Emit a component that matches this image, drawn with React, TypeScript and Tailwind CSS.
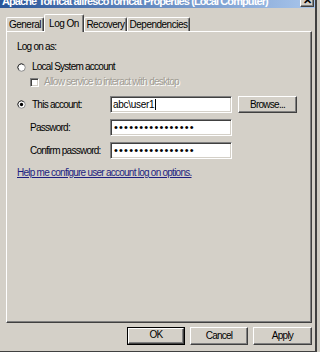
import React from "react";

const TABS = ["General", "Log On", "Recovery", "Dependencies"];
const TAB_W: Record<string, string> = {
  General: "w-[38px]",
  "Log On": "w-[40px]",
  Recovery: "w-[43px]",
  Dependencies: "w-[63px]",
};

const raised =
  "border border-t-white border-l-white border-r-[#404040] border-b-[#404040] shadow-[inset_-1px_-1px_0_#808080] bg-[#d4d0c8]";
const sunken =
  "border border-t-[#808080] border-l-[#808080] border-r-white border-b-white shadow-[inset_1px_1px_0_#404040,inset_-1px_-1px_0_#d4d0c8] bg-white";

function Radio({ checked }: { checked?: boolean }) {
  return (
    <svg width="9" height="9" viewBox="0 0 12 12" className="shrink-0">
      <circle cx="6" cy="6" r="5" fill="#fff" stroke="#8a8a8a" strokeWidth="1.3" />
      <path d="M2.5 9 A4.4 4.4 0 0 1 9 2.5" fill="none" stroke="#303030" strokeWidth="1.3" />
      {checked && <circle cx="6" cy="6" r="2.2" fill="#000" />}
    </svg>
  );
}

function Dots() {
  return (
    <span className="text-[11px] leading-none tracking-[1.2px] text-black">
      {"••••••••••••••••"}
    </span>
  );
}

/** Service properties dialog, Log On page, Windows Classic look. */
export default function App() {
  return (
    <div className="flex h-[352px] w-[320px] overflow-hidden bg-[#cfccc4] font-['Liberation_Sans',Arial,sans-serif] text-[10px] leading-[12px] tracking-[-0.75px] text-black">
      <div className="flex w-[317px] flex-col border-r-2 border-b border-r-[#404040] border-b-[#404040] bg-[#d4d0c8]">
        {/* title bar, top cut off */}
        <div className="flex h-[8px] shrink-0 items-start overflow-hidden bg-gradient-to-r from-[#2a5699] to-[#a9c6ec]">
          <div className="-mt-[5px] flex-1 pl-[2px] text-[11px] font-bold leading-[13px] tracking-[-0.9px] text-white">
            Apache Tomcat alfrescoTomcat Properties (Local Computer)
          </div>
          <div className={`-mt-[7px] mr-[1px] flex h-[14px] w-[14px] items-end justify-center ${raised}`}>
            <span className="text-[11px] font-bold leading-[12px]">✕</span>
          </div>
        </div>

        {/* tabs */}
        <div className="mt-[6px] flex h-[17px] items-end pl-[6px]">
          {TABS.map((t) => {
            const on = t === "Log On";
            return (
              <div
                key={t}
                className={`${TAB_W[t]} flex items-center justify-center rounded-t-[2px] border border-b-0 border-t-white border-l-white border-r-[#404040] bg-[#d4d0c8] tracking-[-0.5px] shadow-[inset_-1px_0_0_#808080] ${
                  on ? "relative z-10 -mb-[1px] h-[18px]" : "h-[14px]"
                }`}
              >
                {t}
              </div>
            );
          })}
        </div>

        {/* page */}
        <div className="ml-[6px] flex h-[292px] w-[306px] flex-col border border-t-white border-l-white border-r-[#404040] border-b-[#404040] pl-[10px] pt-[9px] shadow-[inset_-1px_-1px_0_#808080]">
          <div>Log on as:</div>

          <div className="mt-[8px] flex items-center gap-[6px]">
            <Radio />
            <span>Local System account</span>
          </div>

          <div className="mt-[3px] flex items-center gap-[5px] pl-[13px]">
            <span className={`h-[9px] w-[9px] shrink-0 ${sunken} bg-[#d4d0c8]`} />
            <span className="text-[#a09c94] [text-shadow:1px_1px_0_#fff]">
              Allow service to interact with desktop
            </span>
          </div>

          <div className="mt-[8px] flex h-[17px] items-center">
            <div className="flex w-[93px] items-center gap-[6px]">
              <Radio checked />
              <span>This account:</span>
            </div>
            <div className={`flex h-[17px] w-[122px] items-center pl-[2px] tracking-[-0.3px] ${sunken}`}>
              abc\user1<span className="ml-[1px] inline-block h-[11px] w-px bg-black" />
            </div>
            <button className={`ml-[6px] h-[17px] w-[59px] ${raised}`}>Browse...</button>
          </div>

          <div className="mt-[6px] flex h-[17px] items-center">
            <span className="w-[93px] pl-[13px]">Password:</span>
            <div className={`flex h-[17px] w-[122px] items-center pl-[3px] ${sunken}`}>
              <Dots />
            </div>
          </div>

          <div className="mt-[6px] flex h-[17px] items-center">
            <span className="w-[93px] pl-[13px]">Confirm password:</span>
            <div className={`flex h-[17px] w-[122px] items-center pl-[3px] ${sunken}`}>
              <Dots />
            </div>
          </div>

          <div className="mt-[8px]">
            <span className="text-[#1e1e80] underline">
              Help me configure user account log on options.
            </span>
          </div>
        </div>

        {/* dialog buttons */}
        <div className="mt-[4px] flex w-[312px] justify-end gap-[5px]">
          <button className="h-[18px] w-[58px] border border-black">
            <div className={`h-full w-full ${raised}`}>OK</div>
          </button>
          <button className={`h-[18px] w-[58px] ${raised}`}>Cancel</button>
          <button className={`h-[18px] w-[59px] ${raised}`}>Apply</button>
        </div>
      </div>
    </div>
  );
}
